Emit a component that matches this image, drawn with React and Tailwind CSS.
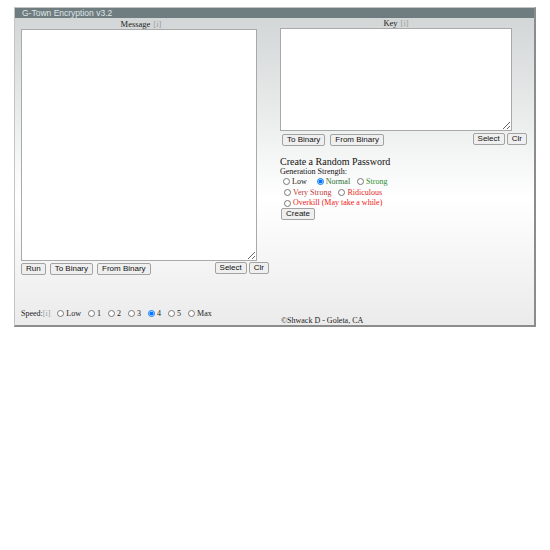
import React from 'react';

const serif = { fontFamily: '"Liberation Serif", "Times New Roman", serif' };
const sans = { fontFamily: '"Liberation Sans", Arial, sans-serif' };

const Btn = ({ children, className = '' }) => (
  <button
    style={sans}
    className={`h-[12px] px-[4px] text-[8px] leading-none text-[#111] bg-[#efefef] border border-[#a3a3a3] rounded-[2px] ${className}`}
  >
    {children}
  </button>
);

const Radio = ({ checked, className = '' }) => (
  <input type="radio" readOnly checked={!!checked} className={`m-0 w-[7px] h-[7px] shrink-0 ${className}`} />
);

const Opt = ({ label, color, checked, className = '' }) => (
  <span className={`flex items-center ${className}`}>
    <Radio checked={checked} />
    <span className={`ml-[2px] ${color}`}>{label}</span>
  </span>
);

const Info = () => <span className="text-[#9a9a9a] ml-[3px]">[i]</span>;

export default function App() {
  const speeds = ['Low', '1', '2', '3', '4', '5', 'Max'];

  return (
    <div className="pt-[7px] pl-[14px]">
      <div className="w-[522px] h-[320px] flex flex-col border-l border-t border-[#c4c4c4] border-r-2 border-b-2 border-r-[#8c8c8c] border-b-[#8c8c8c] bg-linear-to-b from-[#d0d4d4] via-white via-60% to-[#ebebeb]">
        <div style={sans} className="h-[10px] bg-[#6f7c80] text-[#dfe5e6] text-[8.5px] leading-[10px] pl-[7px] shrink-0">
          G-Town Encryption v3.2
        </div>

        <div className="flex flex-1">
          {/* left */}
          <div className="w-[260px] pl-[6px] flex flex-col">
            <div style={serif} className="w-[236px] h-[11px] text-[8.5px] leading-[12px] text-center text-[#222] pl-[4px]">
              Message<Info />
            </div>
            <textarea className="w-[236px] h-[232px] bg-white border border-[#a9a9a9] resize-y block" />
            <div className="w-[248px] flex justify-between mt-[1px]">
              <div className="flex gap-[4px] mt-[1px]">
                <Btn>Run</Btn>
                <Btn>To Binary</Btn>
                <Btn>From Binary</Btn>
              </div>
              <div className="flex gap-[2px]">
                <Btn>Select</Btn>
                <Btn>Clr</Btn>
              </div>
            </div>
            <div className="flex-1" />
            <div style={serif} className="flex items-center h-[11px] text-[8px] text-[#222] mb-[6px]">
              <span>Speed:</span>
              <span className="text-[#9a9a9a]">[i]</span>
              {speeds.map((s) => (
                <Opt key={s} label={s} checked={s === '4'} className="ml-[7px]" />
              ))}
            </div>
          </div>

          {/* right */}
          <div className="flex-1 pl-[5px] flex flex-col">
            <div style={serif} className="w-[232px] h-[10px] text-[8.5px] leading-[11px] text-center text-[#222]">
              Key<Info />
            </div>
            <textarea className="w-[232px] h-[103px] bg-white border border-[#a9a9a9] resize-y block" />
            <div className="w-[247px] flex justify-between mt-[2px]">
              <div className="flex gap-[5px] mt-[1px] ml-[2px]">
                <Btn>To Binary</Btn>
                <Btn>From Binary</Btn>
              </div>
              <div className="flex gap-[2px]">
                <Btn>Select</Btn>
                <Btn>Clr</Btn>
              </div>
            </div>

            <div style={serif} className="mt-[10px] text-[#111] flex flex-col items-start">
              <div className="text-[10px] leading-[12px]">Create a Random Password</div>
              <div className="text-[8px] leading-[8px]">Generation Strength:</div>
              <div className="text-[8px]">
                <div className="flex items-center h-[11px] ml-[3px]">
                  <Opt label="Low" color="text-[#222]" />
                  <Opt label="Normal" color="text-[#2b6e2b]" checked className="ml-[10px]" />
                  <Opt label="Strong" color="text-[#2f8f2f]" className="ml-[7px]" />
                </div>
                <div className="flex items-center h-[11px] ml-[4px]">
                  <Opt label="Very Strong" color="text-[#c23b3b]" />
                  <Opt label="Ridiculous" color="text-[#e42828]" className="ml-[7px]" />
                </div>
                <div className="flex items-center h-[10px] ml-[4px]">
                  <Opt label="Overkill (May take a while)" color="text-[#f01818]" />
                </div>
              </div>
              <Btn className="ml-[1px]">Create</Btn>
            </div>

            <div className="flex-1" />
            <div style={serif} className="text-[8px] leading-[9px] text-[#222] ml-[1px]">
              ©Shwack D - Goleta, CA
            </div>
          </div>
        </div>
      </div>
    </div>
  );
}
